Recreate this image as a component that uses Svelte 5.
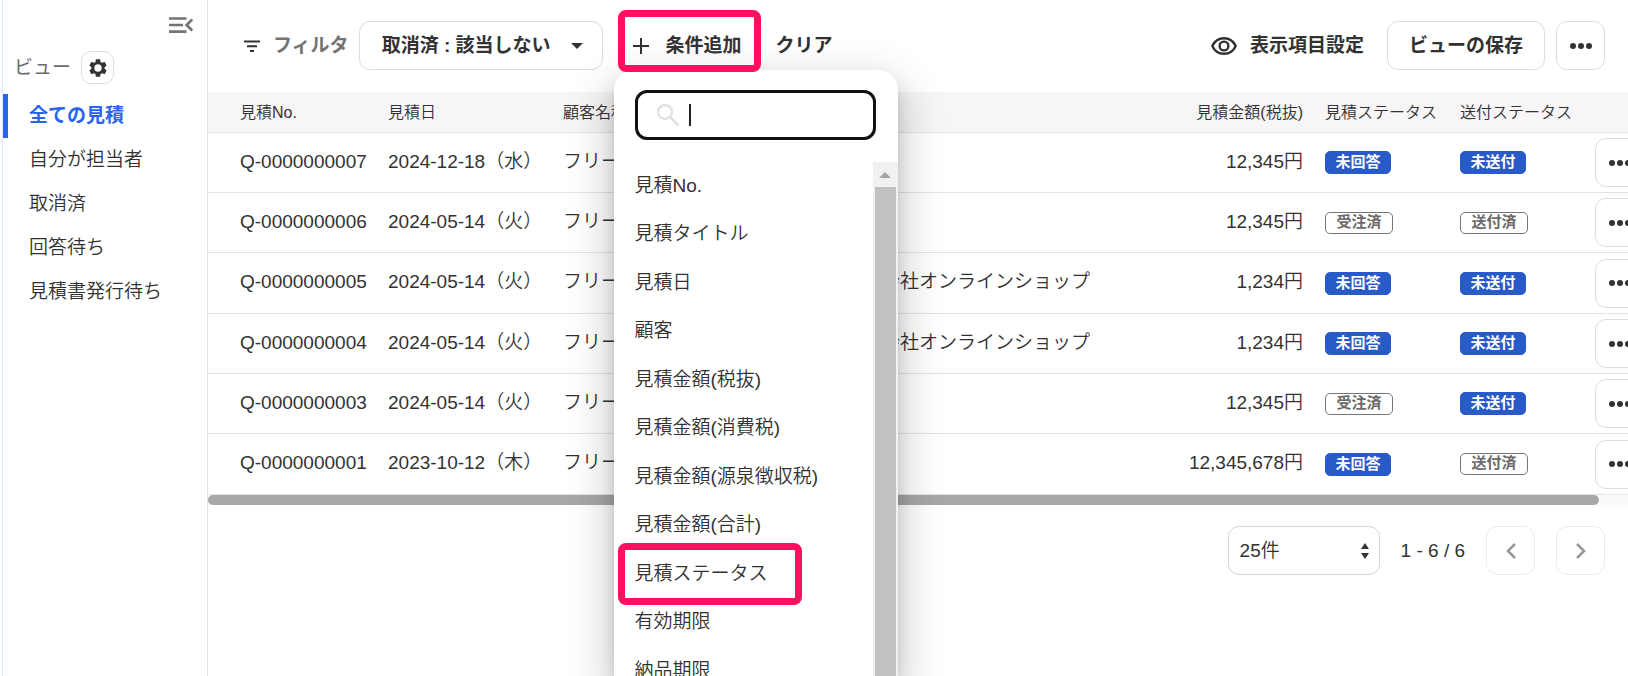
<script lang="ts">
	const views = ['全ての見積', '自分が担当者', '取消済', '回答待ち', '見積書発行待ち'];
	let activeView = $state('全ての見積');
	let search = $state('');
	let perPage = $state('25');

	const conditions = [
		'見積No.',
		'見積タイトル',
		'見積日',
		'顧客',
		'見積金額(税抜)',
		'見積金額(消費税)',
		'見積金額(源泉徴収税)',
		'見積金額(合計)',
		'見積ステータス',
		'有効期限',
		'納品期限'
	];
	const marked = '見積ステータス';

	const shop = '会社オンラインショップ';
	const quotes = [
		{ no: 'Q-0000000007', date: '2024-12-18（水）', company: '', amount: '12,345円', status: '未回答', sent: '未送付' },
		{ no: 'Q-0000000006', date: '2024-05-14（火）', company: '', amount: '12,345円', status: '受注済', sent: '送付済' },
		{ no: 'Q-0000000005', date: '2024-05-14（火）', company: shop, amount: '1,234円', status: '未回答', sent: '未送付' },
		{ no: 'Q-0000000004', date: '2024-05-14（火）', company: shop, amount: '1,234円', status: '未回答', sent: '未送付' },
		{ no: 'Q-0000000003', date: '2024-05-14（火）', company: '', amount: '12,345円', status: '受注済', sent: '未送付' },
		{ no: 'Q-0000000001', date: '2023-10-12（木）', company: '', amount: '12,345,678円', status: '未回答', sent: '送付済' }
	];
</script>

{#snippet dots()}
	<svg width="24" height="24" viewBox="0 0 24 24" fill="currentColor">
		<circle cx="4" cy="12" r="3" />
		<circle cx="12" cy="12" r="3" />
		<circle cx="20" cy="12" r="3" />
	</svg>
{/snippet}

{#snippet badge(text: string)}
	<span class="badge" class:open={text.startsWith('未')}>{text}</span>
{/snippet}

<div class="app">
	<aside class="sidebar">
		<button class="collapse" aria-label="メニューを閉じる">
			<svg width="24" height="16" viewBox="0 0 24 16" fill="none" stroke="currentColor" stroke-width="2.6">
				<path d="M0 1.5h17.5M0 8h14M0 14.6h17.5" />
				<path d="M23.2 2.4 17.6 8l5.6 5.6" />
			</svg>
		</button>
		<div class="views-head">
			<span>ビュー</span>
			<button class="gear" aria-label="ビュー設定">
				<svg width="22" height="22" viewBox="0 0 24 24" fill="currentColor">
					<path d="M19.14 12.94c.04-.3.06-.61.06-.94s-.02-.64-.07-.94l2.03-1.58a.49.49 0 0 0 .12-.61l-1.92-3.32a.49.49 0 0 0-.59-.22l-2.39.96c-.5-.38-1.03-.7-1.62-.94l-.36-2.54a.48.48 0 0 0-.48-.41h-3.84a.47.47 0 0 0-.47.41l-.36 2.54c-.59.24-1.13.57-1.62.94l-2.39-.96a.48.48 0 0 0-.59.22L2.74 8.87a.47.47 0 0 0 .12.61l2.03 1.58c-.05.3-.09.63-.09.94s.02.64.07.94l-2.03 1.58a.49.49 0 0 0-.12.61l1.92 3.32c.12.22.37.29.59.22l2.39-.96c.5.38 1.03.7 1.62.94l.36 2.54c.05.24.24.41.48.41h3.84c.24 0 .44-.17.47-.41l.36-2.54c.59-.24 1.13-.56 1.62-.94l2.39.96c.22.08.47 0 .59-.22l1.92-3.32a.47.47 0 0 0-.12-.61zM12 16a4 4 0 1 1 0-8 4 4 0 0 1 0 8z" />
				</svg>
			</button>
		</div>
		<nav>
			{#each views as view}
				<a href="#{view}" class:active={view === activeView} onclick={() => (activeView = view)}>{view}</a>
			{/each}
		</nav>
	</aside>

	<main>
		<div class="toolbar">
			<div class="filter-label">
				<svg width="18" height="12" viewBox="0 0 18 12" fill="none" stroke="currentColor" stroke-width="2">
					<path d="M1 1.5h16M4 6.2h10M7 10.9h4" />
				</svg>
				フィルタ
			</div>
			<button class="box filter">
				取消済 : 該当しない
				<svg width="12" height="6" viewBox="0 0 12 6" fill="currentColor"><path d="M0 0h12L6 6z" /></svg>
			</button>
			<div class="add">
				<button class="plain add-button">
					<svg width="18" height="18" viewBox="0 0 18 18" fill="none" stroke="currentColor" stroke-width="2">
						<path d="M9 1v16M1 9h16" />
					</svg>
					条件追加
				</button>

				<div class="menu">
					<div class="search">
						<svg width="24" height="24" viewBox="0 0 24 24" fill="none" stroke="currentColor" stroke-width="2.6">
							<circle cx="9" cy="9" r="7" />
							<path d="m14.5 14.5 8 8" />
						</svg>
						<span class="caret"></span>
						<input type="text" aria-label="条件を検索" bind:value={search} />
					</div>
					<div class="options">
						<ul>
							{#each conditions.filter((c) => c.includes(search)) as condition}
								<li><button class:marked={condition === marked}>{condition}</button></li>
							{/each}
						</ul>
						<div class="scrollbar">
							<svg width="12" height="6" viewBox="0 0 12 6" fill="#a3a3a3"><path d="M0 6h12L6 0z" /></svg>
							<div class="thumb"></div>
						</div>
					</div>
				</div>
			</div>
			<button class="plain clear">クリア</button>

			<div class="actions">
				<button class="plain columns">
					<svg width="26" height="18" viewBox="0 0 26 18" fill="none" stroke="currentColor" stroke-width="2.4">
						<path d="M1.3 9C3.4 4.3 7.8 1.2 13 1.2S22.600 4.3 24.7 9C22.600 13.7 18.2 16.8 13 16.8S3.4 13.7 1.3 9z" />
						<circle cx="13" cy="9" r="4.4" />
					</svg>
					表示項目設定
				</button>
				<button class="box save">ビューの保存</button>
				<button class="box square" aria-label="その他">{@render dots()}</button>
			</div>
		</div>

		<div class="table-wrap">
			<table>
				<colgroup>
					<col class="c-no" />
					<col class="c-date" />
					<col class="c-customer" />
					<col class="c-company" />
					<col class="c-amount" />
					<col class="c-status" />
					<col class="c-sent" />
					<col class="c-more" />
				</colgroup>
				<thead>
					<tr>
						<th>見積No.</th>
						<th>見積日</th>
						<th>顧客名称</th>
						<th></th>
						<th class="amount">見積金額(税抜)</th>
						<th class="status">見積ステータス</th>
						<th>送付ステータス</th>
						<th></th>
					</tr>
				</thead>
				<tbody>
					{#each quotes as quote}
						<tr>
							<td class="text">{quote.no}</td>
							<td class="text">{quote.date}</td>
							<td class="text">フリー</td>
							<td class="text">{quote.company}</td>
							<td class="text amount">{quote.amount}</td>
							<td class="status">{@render badge(quote.status)}</td>
							<td>{@render badge(quote.sent)}</td>
							<td><button class="box square" aria-label="操作">{@render dots()}</button></td>
						</tr>
					{/each}
				</tbody>
			</table>
		</div>
		<div class="h-scroll"><div class="h-thumb"></div></div>

		<div class="pager">
			<div class="per-page">
				<select aria-label="表示件数" bind:value={perPage}>
					<option value="25">25件</option>
				</select>
				<svg width="8" height="16" viewBox="0 0 8 16" fill="currentColor">
					<path d="M4 0l4 6H0zM4 16l4-6H0z" />
				</svg>
			</div>
			<span class="range">1 - 6 / 6</span>
			<button class="box square" disabled aria-label="前へ">
				<svg width="10" height="16" viewBox="0 0 10 16" fill="none" stroke="currentColor" stroke-width="2.6"><path d="M9 1 2 8l7 7" /></svg>
			</button>
			<button class="box square" disabled aria-label="次へ">
				<svg width="10" height="16" viewBox="0 0 10 16" fill="none" stroke="currentColor" stroke-width="2.6"><path d="m1 1 7 7-7 7" /></svg>
			</button>
		</div>
	</main>
</div>

<style>
	:global(body) {
		background: #fff;
	}

	.app {
		display: flex;
		height: 100vh;
		overflow: hidden;
		color: #323232;
		font-family: 'Liberation Sans', 'Noto Sans CJK JP', sans-serif;
		font-size: 19px;
		font-weight: 350;
		line-height: 28px;
	}

	button,
	input,
	select {
		margin: 0;
		padding: 0;
		border: 0;
		background: none;
		color: inherit;
		font: inherit;
		white-space: nowrap;
	}

	svg {
		flex-shrink: 0;
	}

	/* ── Sidebar ── */
	.sidebar {
		box-sizing: border-box;
		flex: 0 0 208px;
		display: flex;
		flex-direction: column;
		padding-left: 1px;
		border-left: 2px solid #fbfcff;
		border-right: 1px solid #e4e4e4;
		box-shadow: inset 1px 0 #dbe6ff;
	}

	.collapse {
		align-self: flex-end;
		display: flex;
		margin: 17px 14px 18px;
		color: #737373;
	}

	.views-head {
		display: flex;
		align-items: center;
		gap: 10px;
		padding-left: 11px;
		color: #6b6b6b;
		font-weight: 400;
	}

	.gear {
		box-sizing: border-box;
		display: flex;
		align-items: center;
		justify-content: center;
		width: 33px;
		height: 33px;
		border: 1px solid #dcdcdc;
		border-radius: 10px;
		color: #323232;
	}

	nav {
		display: flex;
		flex-direction: column;
		margin-top: 10px;
	}

	nav a {
		padding: 8px 0 8px 21px;
		border-left: 5px solid transparent;
		color: inherit;
		text-decoration: none;
	}

	nav a.active {
		border-color: #2864f0;
		color: #2864f0;
		font-weight: 700;
	}

	/* ── Toolbar ── */
	main {
		flex: 1;
		min-width: 0;
	}

	.toolbar {
		display: flex;
		align-items: center;
		height: 49px;
		padding: 21px 23px 22px 35px;
		font-weight: 700;
	}

	.filter-label {
		display: flex;
		align-items: center;
		gap: 12px;
		color: #737373;
	}

	.filter-label svg {
		color: #323232;
	}

	.box {
		box-sizing: border-box;
		height: 49px;
		border: 1px solid #dcdcdc;
		border-radius: 11px;
		background: #fff;
	}

	.square {
		display: flex;
		align-items: center;
		justify-content: center;
		width: 49px;
	}

	.filter {
		display: flex;
		align-items: center;
		gap: 20px;
		margin-left: 10px;
		padding: 0 19px 0 22px;
	}

	.plain {
		display: flex;
		align-items: center;
		height: 49px;
	}

	.add {
		position: relative;
		margin-left: 15px;
	}

	.add-button {
		position: relative;
		z-index: 2;
		gap: 16px;
		padding: 0 19px 0 14px;
	}

	.add-button::after {
		content: '';
		position: absolute;
		inset: -11px 0 -2px;
		border: 7px solid #ff0f5f;
		border-radius: 8px;
	}

	.clear {
		margin-left: 15px;
	}

	.actions {
		display: flex;
		align-items: center;
		gap: 11px;
		margin-left: auto;
	}

	.columns {
		gap: 13px;
		margin-right: 12px;
	}

	.save {
		padding: 0 21px;
	}

	/* ── Condition menu ── */
	.menu {
		position: absolute;
		z-index: 1;
		top: 49px;
		left: -4px;
		display: flex;
		flex-direction: column;
		width: 284px;
		height: calc(100vh - 70px);
		border-radius: 20px 20px 0 0;
		background: #fff;
		box-shadow: 0 8px 15px -3px #0003, 0 16px 44px 6px #0003;
		font-weight: 350;
	}

	.search {
		display: flex;
		align-items: center;
		height: 44px;
		margin: 20px 22px 22px 21px;
		border: 3px solid #111;
		border-radius: 12px;
		padding-left: 18px;
		color: #e2e2e2;
	}

	.caret {
		width: 2px;
		height: 22px;
		margin-left: 9px;
		background: #222;
	}

	.search input {
		flex: 1;
		min-width: 0;
		outline: none;
		color: #323232;
	}

	.options {
		flex: 1;
		display: flex;
		min-height: 0;
	}

	ul {
		flex: 1;
		margin: 0;
		padding: 0;
		overflow: hidden;
		list-style: none;
	}

	li {
		height: 48px;
	}

	li:nth-child(even) {
		padding-bottom: 1px;
	}

	li button {
		position: relative;
		width: 100%;
		height: 48px;
		padding-left: 21px;
		text-align: left;
	}

	li .marked::after {
		content: '';
		position: absolute;
		inset: -7px auto -7px 4px;
		width: 170px;
		border: 7px solid #ff0f5f;
		border-radius: 8px;
	}

	.scrollbar {
		flex: 0 0 25px;
		display: flex;
		flex-direction: column;
		align-items: center;
		gap: 9px;
		padding-top: 10px;
		background: #f1f1f1;
	}

	.thumb {
		flex: 1;
		width: 21px;
		background: #c1c1c1;
	}

	/* ── Table ── */
	.table-wrap {
		overflow: hidden;
	}

	table {
		width: 1450px;
		min-width: calc(100% + 30px);
		border-collapse: separate;
		border-spacing: 0;
		table-layout: fixed;
	}

	.c-no { width: 180px; }
	.c-date { width: 175px; }
	.c-customer { width: 318px; }
	.c-amount { width: 200px; }
	.c-status { width: 157px; }
	.c-sent { width: 135px; }
	.c-more { width: 63px; }

	th,
	td {
		box-sizing: border-box;
		padding: 0;
		border-bottom: 1px solid #e4e4e4;
		text-align: left;
		white-space: nowrap;
	}

	th {
		height: 41px;
		padding-top: 2px;
		background: #f7f5f6;
		font-size: 16px;
		font-weight: 350;
	}

	td {
		height: 60px;
	}

	td.text {
		padding-bottom: 2px;
	}

	tr:nth-child(3n) td {
		height: 61px;
	}

	th:first-child,
	td:first-child {
		padding-left: 32px;
	}

	.amount {
		text-align: right;
	}

	.status {
		padding-left: 22px;
	}

	.badge {
		box-sizing: border-box;
		display: block;
		width: 68px;
		padding-bottom: 2px;
		border: 1px solid #757575;
		border-radius: 5px;
		color: #6b6b6b;
		font-size: 15px;
		font-weight: 700;
		line-height: 18px;
		text-align: center;
	}

	.badge.open {
		width: 66px;
		border-color: #285ac8;
		background: #285ac8;
		color: #fff;
		line-height: 19px;
	}

	.h-scroll {
		height: 10px;
		padding-right: 29px;
		background: #fafafa;
	}

	.h-thumb {
		height: 100%;
		border-radius: 5px;
		background: #a8a8a8;
	}

	/* ── Pager ── */
	.pager {
		display: flex;
		align-items: center;
		justify-content: flex-end;
		gap: 21px;
		padding: 21px 23px;
	}

	.per-page {
		position: relative;
	}

	.per-page svg {
		position: absolute;
		top: 17px;
		right: 11px;
		pointer-events: none;
	}

	select {
		appearance: none;
		box-sizing: border-box;
		width: 152px;
		height: 49px;
		padding: 0 11px;
		border: 1px solid #d4d4d4;
		border-radius: 11px;
	}

	.pager .square {
		border-color: #ebebeb;
		color: #999;
	}
</style>
